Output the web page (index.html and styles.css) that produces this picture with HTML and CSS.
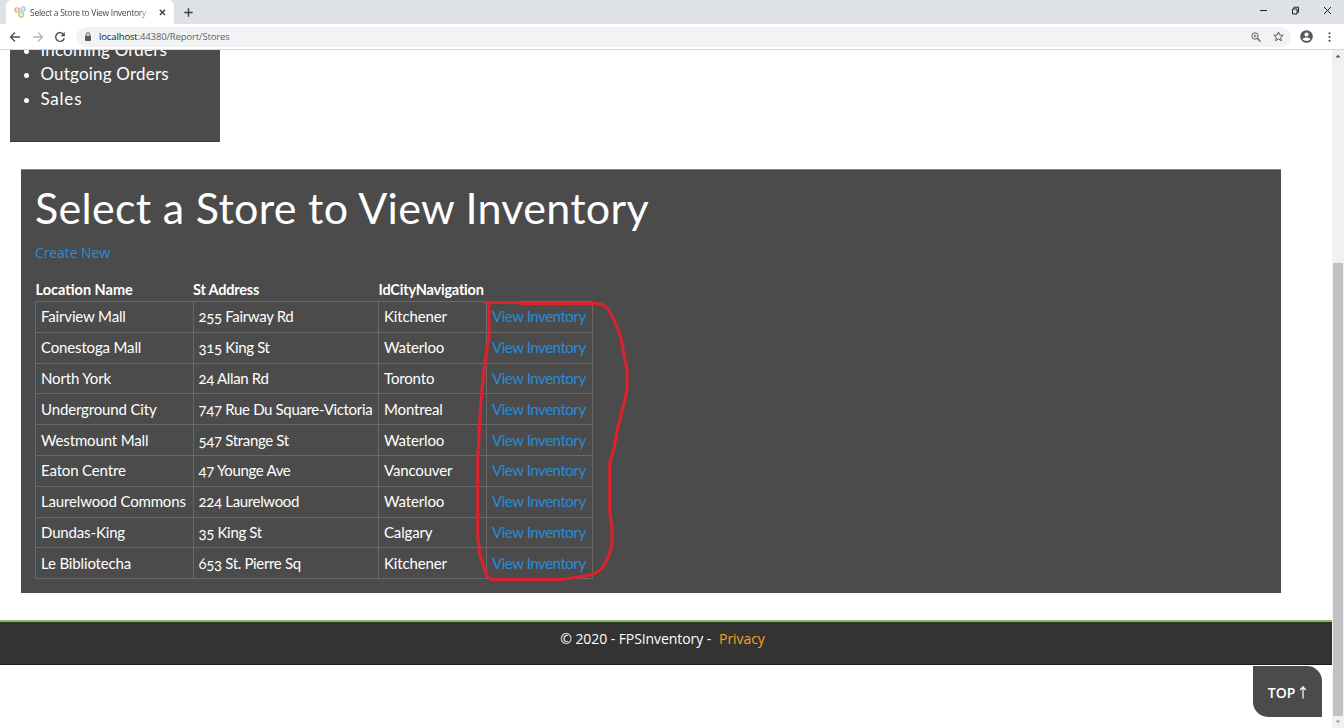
FILE: index.html
```html
<!DOCTYPE html>
<html lang="en">
<head>
<meta charset="utf-8">
<title>Select a Store to View Inventory - FPSInventory</title>
<link rel="stylesheet" href="styles.css">
</head>
<body>
<div class="browser">
  <header class="tabstrip">
    <div class="tab">
      <svg class="favicon" width="12" height="12" viewBox="0 0 12 12" fill="none" stroke-width="1.4"><circle cx="3" cy="4" r="2.1" stroke="#f4a36c"/><circle cx="9" cy="3" r="2.1" stroke="#8fcdf0"/><circle cx="7.2" cy="8.7" r="2.3" stroke="#9fdc7c"/><path d="M3 3v2M9 2v2M7 8v2" stroke="#e7cdb5" stroke-width=".8"/></svg>
      <span class="tab-title">Select a Store to View Inventory -</span>
      <svg class="tab-close" width="7" height="7" viewBox="0 0 7 7" stroke="#3c4043" stroke-width="1.4"><path d="M.8.8l5.2 5.2M6 .8L.8 6"/></svg>
    </div>
    <svg class="new-tab" width="9" height="9" viewBox="0 0 9 9" stroke="#3c4043" stroke-width="1.4"><path d="M4.5.3v8.4M.3 4.5h8.4"/></svg>
    <div class="window-controls">
      <svg width="9" height="9" viewBox="0 0 9 9" stroke="#222" fill="none"><path d="M1 4.5h7"/></svg>
      <svg width="9" height="9" viewBox="0 0 9 9" stroke="#222" fill="none"><path d="M1.5 3h4.5v5H1.5zM3 3V1.2h4.5v5H6"/></svg>
      <svg width="9" height="9" viewBox="0 0 9 9" stroke="#222" fill="none"><path d="M1 1l7 7M8 1L1 8"/></svg>
    </div>
  </header>
  <div class="toolbar">
    <svg width="12" height="12" viewBox="0 0 12 12" stroke="#4a4d51" stroke-width="1.3" fill="none"><path d="M11 6H1.5M6 1.5L1.5 6 6 10.500"/></svg>
    <svg class="forward" width="12" height="12" viewBox="0 0 12 12" stroke="#b5b7ba" stroke-width="1.3" fill="none"><path d="M1 6h9.500M6 1.500L10.500 6 6 10.500"/></svg>
    <svg class="reload" width="12" height="12" viewBox="0 0 12 12" stroke="#4a4d51" stroke-width="1.4" fill="none"><path d="M9.800 3.600A4.400 4.400 0 1 0 10.300 7.200"/><path d="M10.800 1v4.300H6.500z" fill="#4a4d51" stroke="none"/></svg>
    <div class="omnibox">
      <svg width="8" height="10" viewBox="0 0 8 10"><path d="M1.500 4.200h5v4.300h-5z" fill="#55585c" stroke="#55585c"/><path d="M2.200 4V2.500a1.800 1.800 0 0 1 3.600 0V4" fill="none" stroke="#55585c"/></svg>
      <span class="url"><b class="host">localhost</b>:44380/Report/Stores</span>
      <svg class="magnify" width="10" height="10" viewBox="0 0 10 10" stroke="#5f6368" fill="none"><circle cx="4" cy="4" r="3.200"/><path d="M6.300 6.300l3.200 3.200" stroke-width="1.300"/><path d="M2.500 4h3M4 2.500v3" stroke-width=".8"/></svg>
      <svg class="star" width="11" height="11" viewBox="0 0 11 11" stroke="#55585c" fill="none"><path d="M5.500 1l1.300 3 3.300.3-2.500 2.200.8 3.200-2.900-1.700-2.900 1.700.8-3.200L.9 4.300 4.200 4z"/></svg>
    </div>
    <svg class="avatar" width="13" height="13" viewBox="0 0 13 13"><circle cx="6.500" cy="6.500" r="6.300" fill="#55585d"/><circle cx="6.500" cy="4.500" r="2.100" fill="#fff"/><path d="M2.500 9.300C3.300 7 9.700 7 10.500 9.300 8.500 11.500 4.500 11.500 2.500 9.300z" fill="#fff"/></svg>
    <svg class="kebab" width="3" height="10" viewBox="0 0 3 10" fill="#4a4d51"><circle cx="1.500" cy="1.200" r="1.050"/><circle cx="1.500" cy="5" r="1.050"/><circle cx="1.500" cy="8.800" r="1.050"/></svg>
  </div>
  <div class="viewport">
    <main class="page">
      <nav class="menu">
        <ul>
          <li><span class="m1">Incoming Orders</span></li>
          <li><span class="m1">Outgoing Orders</span></li>
          <li><span class="m3">Sales</span></li>
        </ul>
      </nav>
      <section class="panel">
        <h1>Select a Store to View Inventory</h1>
        <a class="create">Create New</a>
        <div class="table-wrap">
          <table>
            <colgroup><col class="c1"><col class="c2"><col class="c3"><col class="c4"></colgroup>
            <thead><tr><th>Location Name</th><th>St Address</th><th>IdCityNavigation</th><th></th></tr></thead>
            <tbody>
              <tr><td>Fairview Mall</td><td>255 Fairway Rd</td><td>Kitchener</td><td><a>View Inventory</a></td></tr>
              <tr><td>Conestoga Mall</td><td>315 King St</td><td>Waterloo</td><td><a>View Inventory</a></td></tr>
              <tr><td>North York</td><td>24 Allan Rd</td><td>Toronto</td><td><a>View Inventory</a></td></tr>
              <tr><td>Underground City</td><td>747 Rue Du Square-Victoria</td><td>Montreal</td><td><a>View Inventory</a></td></tr>
              <tr><td>Westmount Mall</td><td>547 Strange St</td><td>Waterloo</td><td><a>View Inventory</a></td></tr>
              <tr><td>Eaton Centre</td><td>47 Younge Ave</td><td>Vancouver</td><td><a>View Inventory</a></td></tr>
              <tr><td>Laurelwood Commons</td><td>224 Laurelwood</td><td>Waterloo</td><td><a>View Inventory</a></td></tr>
              <tr><td>Dundas-King</td><td>35 King St</td><td>Calgary</td><td><a>View Inventory</a></td></tr>
              <tr><td>Le Bibliotecha</td><td>653 St. Pierre Sq</td><td>Kitchener</td><td><a>View Inventory</a></td></tr>
            </tbody>
          </table>
        </div>
      </section>
      <footer class="footer"><span>© 2020 - FPSInventory -</span><a>Privacy</a></footer>
      <div class="top-row"><a class="top-button">TOP <svg width="8" height="13" viewBox="0 0 8 13" fill="none" stroke="#fff" stroke-width="1.200"><path d="M4 12.500V1M1.200 4L4 1l2.800 3"/></svg></a></div>
    </main>
    <div class="scrollbar">
      <svg width="6" height="4" viewBox="0 0 6 4"><path d="M.5 3.500L3 .8l2.500 2.700z" fill="#505050"/></svg>
      <div class="thumb"></div>
      <svg width="6" height="4" viewBox="0 0 6 4"><path d="M.5.5L3 3.200 5.500.5z" fill="#a0a0a0"/></svg>
    </div>
  </div>
  <svg class="marker" width="160" height="290" viewBox="475 297 160 290" fill="none" stroke="#d9232e" stroke-width="3.200" stroke-linecap="round" stroke-linejoin="round"><path d="M485 302.500H519L521 303.700H597Q604 304 608 309Q615 320 621 338L625 361L627 369V390L624 403L617 431L614 449L609.700 463V512L612 527V545Q609 558 603 567Q598 573 590 575L575 577.500L562 579.500H493Q488 579 486 573L480 555L477.700 537V460L481 400L484 370L487 350L489 338V304"/></svg>
</div>
</body>
</html>
```
FILE: styles.css
```css
* { box-sizing: border-box; }
body { margin: 0; background: #fff; font-family: Lato, "Open Sans", sans-serif; }
svg { display: block; flex: none; }
.browser { width: 1344px; height: 728px; overflow: hidden; position: relative; display: flex; flex-direction: column; }

.tabstrip { height: 24px; flex: none; background: #dee1e6; display: flex; align-items: center; padding-left: 6px; }
.tab { width: 168px; height: 24px; background: #fff; border-radius: 6px 6px 0 0; display: flex; align-items: center; padding-left: 8px; }
.tab-title { width: 123px; margin-left: 4px; font: 8.500px "Open Sans", sans-serif; letter-spacing: -.27px; color: #45484b; white-space: nowrap; overflow: hidden; -webkit-mask-image: linear-gradient(90deg, #000 88%, transparent); mask-image: linear-gradient(90deg, #000 88%, transparent); }
.tab-close { margin-left: 6px; }
.new-tab { margin-left: 10px; }
.window-controls { margin-left: auto; display: flex; gap: 23px; padding: 0 12px 4px 0; }

.toolbar { height: 26px; flex: none; background: #fff; border-bottom: 1px solid #d5d7da; display: flex; align-items: center; padding-left: 9px; }
.forward { margin-left: 11px; }
.reload { margin-left: 10px; }
.omnibox { margin-left: 10px; width: 1215px; height: 20px; border-radius: 10px; background: #f1f3f4; display: flex; align-items: center; padding-left: 8px; }
.url { margin-left: 7px; font: 9.500px "Open Sans", sans-serif; letter-spacing: -.13px; color: #5f6368; white-space: nowrap; }
.host { font-weight: 400; color: #202124; }
.magnify { margin-left: auto; }
.star { margin: 0 7px 0 12px; }
.avatar { margin-left: 8.500px; }
.kebab { margin-left: 15px; }

.viewport { flex: 1; min-height: 0; display: flex; }
.page { width: 1332px; }
.menu { width: 210px; height: 92px; margin-left: 10.400px; background: #4b4b4b; overflow: hidden; display: flex; flex-direction: column; justify-content: flex-end; padding-bottom: 30px; color: #fff; border-bottom: 1px solid #3d3b3d; }
.menu ul { margin: 0; padding-left: 30px; font-size: 17px; line-height: 24.500px; }
.menu li::marker { font-size: 14px; }
.m1 { letter-spacing: .2px; }
.m3 { letter-spacing: .8px; }

.panel { width: 1260px; height: 424px; margin: 27px 0 0 21px; background: #4b4b4b; color: #fff; padding: 13px 14px; border-top: 1px solid #858585; }
h1 { margin: 0; font-size: 43px; line-height: 50px; font-weight: 400; letter-spacing: .3px; white-space: nowrap; }
.create { display: block; height: 20px; margin-top: 10px; font: 14px/20px "Open Sans", sans-serif; letter-spacing: -.1px; color: #268bd8; }
.table-wrap { margin-top: 16px; }
table { width: 557px; table-layout: fixed; border-collapse: collapse; font-size: 15px; font-variant-numeric: oldstyle-nums; }
.c1 { width: 157.500px; }
.c2 { width: 185.500px; }
.c3 { width: 108px; }
.c4 { width: 106px; }
th { height: 22px; padding: 0; line-height: 22px; text-align: left; font-size: 14.500px; font-weight: 700; white-space: nowrap; letter-spacing: -.2px; }
th:first-child { letter-spacing: 0; }
td { height: 30.800px; padding: 0 5px 1px; border: 1px solid #696969; line-height: 20px; white-space: nowrap; letter-spacing: -.15px; }
td:nth-child(2) { letter-spacing: -.34px; }
td:nth-child(4) { letter-spacing: -.45px; }
td a { color: #268bd8; }

.footer { height: 45px; margin-top: 27px; background: #333; border-top: 2px solid #78c257; border-bottom: 1px solid #1c1c1c; display: flex; justify-content: center; gap: 8px; padding: 7px 7px 0 0; font: 14px/20px "Open Sans", sans-serif; letter-spacing: -.08px; color: #fff; }
.footer a { color: #f5a11c; }
.top-row { display: flex; justify-content: flex-end; padding: 1px 10px 0 0; }
.top-button { width: 69px; height: 51px; border-radius: 0 15px 0 15px; background: #4b4b4b; color: #fff; display: flex; align-items: center; justify-content: center; gap: 4px; padding-top: 2px; font: 600 14px "Open Sans", sans-serif; }

.scrollbar { width: 12px; background: #f1f1f1; display: flex; flex-direction: column; align-items: center; padding: 4px 0; }
.thumb { width: 10px; height: 453px; margin: auto 0 4px; background: #c1c1c1; }
.marker { position: absolute; left: 475px; top: 297px; }
```
